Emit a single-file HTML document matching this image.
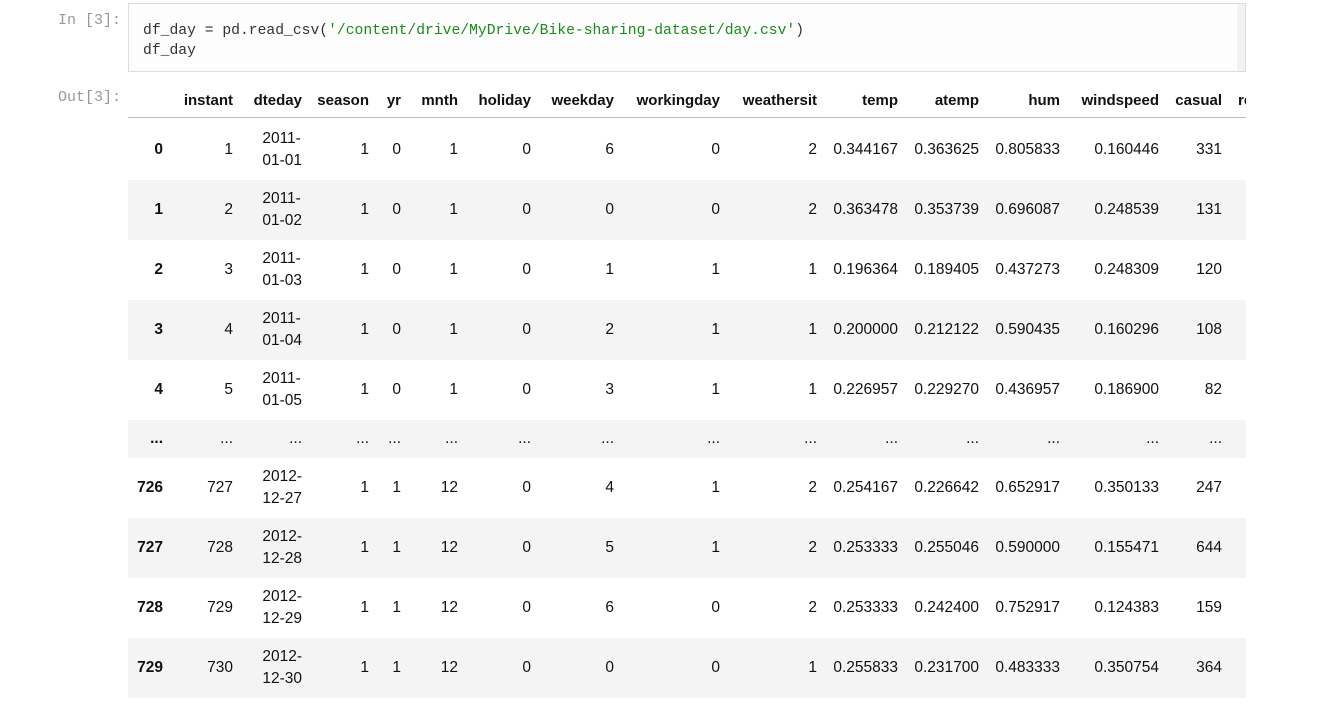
<!DOCTYPE html>
<html><head><meta charset="utf-8"><style>
body{margin:0;background:#fff;width:1330px;height:707px;overflow:hidden;position:relative;font-family:"Liberation Sans",sans-serif;}
.prompt{position:absolute;font-family:"Liberation Mono",monospace;font-size:15px;color:#999;}
.code{position:absolute;left:128px;top:3px;width:1116px;height:67px;border:1px solid #dcdcdc;background:#fdfdfd;}
.code .strip{position:absolute;right:0;top:0;width:8px;height:100%;background:#f2f2f2;}
.code pre{margin:0;position:absolute;left:14px;top:17px;font-family:"Liberation Mono",monospace;font-size:14.7px;line-height:20px;color:#333;}
.s{color:#1a8a1a;}
.wrap{position:absolute;left:128px;top:83px;width:1118px;height:620px;overflow:hidden;}
table{border-collapse:collapse;table-layout:fixed;width:1140px;font-size:15.5px;color:#111;}
td,th{padding:0;text-align:right;white-space:nowrap;}
th{height:34px;border-bottom:1px solid #bdbdbd;font-weight:bold;font-size:15px;}
td{height:60px;}
tr.f td{height:60px;padding-top:2px;}
tr.g td{background:#f4f4f4;}
tr.e td{height:38px;}
td.i{font-weight:bold;}
.d{display:inline-block;text-align:left;line-height:22px;}
</style></head><body>
<div class="prompt" style="left:58px;top:12px">In [3]:</div>
<div class="code"><div class="strip"></div><pre>df_day = pd.read_csv(<span class="s">'/content/drive/MyDrive/Bike-sharing-dataset/day.csv'</span>)
df_day</pre></div>
<div class="prompt" style="left:58px;top:89px">Out[3]:</div>
<div class="wrap"><table>
<colgroup><col style="width:35px"><col style="width:70px"><col style="width:69px"><col style="width:67px"><col style="width:32px"><col style="width:57px"><col style="width:73px"><col style="width:83px"><col style="width:106px"><col style="width:97px"><col style="width:81px"><col style="width:81px"><col style="width:81px"><col style="width:99px"><col style="width:63px"><col style="width:46px"></colgroup>
<tr><th></th><th>instant</th><th>dteday</th><th>season</th><th>yr</th><th>mnth</th><th>holiday</th><th>weekday</th><th>workingday</th><th>weathersit</th><th>temp</th><th>atemp</th><th>hum</th><th>windspeed</th><th>casual</th><th style="text-align:left;padding-left:16px">re</th></tr>
<tr class="f"><td class="i">0</td><td>1</td><td><span class="d">2011-<br>01-01</span></td><td>1</td><td>0</td><td>1</td><td>0</td><td>6</td><td>0</td><td>2</td><td>0.344167</td><td>0.363625</td><td>0.805833</td><td>0.160446</td><td>331</td><td></td></tr>
<tr class="g"><td class="i">1</td><td>2</td><td><span class="d">2011-<br>01-02</span></td><td>1</td><td>0</td><td>1</td><td>0</td><td>0</td><td>0</td><td>2</td><td>0.363478</td><td>0.353739</td><td>0.696087</td><td>0.248539</td><td>131</td><td></td></tr>
<tr><td class="i">2</td><td>3</td><td><span class="d">2011-<br>01-03</span></td><td>1</td><td>0</td><td>1</td><td>0</td><td>1</td><td>1</td><td>1</td><td>0.196364</td><td>0.189405</td><td>0.437273</td><td>0.248309</td><td>120</td><td></td></tr>
<tr class="g"><td class="i">3</td><td>4</td><td><span class="d">2011-<br>01-04</span></td><td>1</td><td>0</td><td>1</td><td>0</td><td>2</td><td>1</td><td>1</td><td>0.200000</td><td>0.212122</td><td>0.590435</td><td>0.160296</td><td>108</td><td></td></tr>
<tr><td class="i">4</td><td>5</td><td><span class="d">2011-<br>01-05</span></td><td>1</td><td>0</td><td>1</td><td>0</td><td>3</td><td>1</td><td>1</td><td>0.226957</td><td>0.229270</td><td>0.436957</td><td>0.186900</td><td>82</td><td></td></tr>
<tr class="g e"><td class="i">...</td><td>...</td><td>...</td><td>...</td><td>...</td><td>...</td><td>...</td><td>...</td><td>...</td><td>...</td><td>...</td><td>...</td><td>...</td><td>...</td><td>...</td><td></td></tr>
<tr><td class="i">726</td><td>727</td><td><span class="d">2012-<br>12-27</span></td><td>1</td><td>1</td><td>12</td><td>0</td><td>4</td><td>1</td><td>2</td><td>0.254167</td><td>0.226642</td><td>0.652917</td><td>0.350133</td><td>247</td><td></td></tr>
<tr class="g"><td class="i">727</td><td>728</td><td><span class="d">2012-<br>12-28</span></td><td>1</td><td>1</td><td>12</td><td>0</td><td>5</td><td>1</td><td>2</td><td>0.253333</td><td>0.255046</td><td>0.590000</td><td>0.155471</td><td>644</td><td></td></tr>
<tr><td class="i">728</td><td>729</td><td><span class="d">2012-<br>12-29</span></td><td>1</td><td>1</td><td>12</td><td>0</td><td>6</td><td>0</td><td>2</td><td>0.253333</td><td>0.242400</td><td>0.752917</td><td>0.124383</td><td>159</td><td></td></tr>
<tr class="g"><td class="i">729</td><td>730</td><td><span class="d">2012-<br>12-30</span></td><td>1</td><td>1</td><td>12</td><td>0</td><td>0</td><td>0</td><td>1</td><td>0.255833</td><td>0.231700</td><td>0.483333</td><td>0.350754</td><td>364</td><td></td></tr>
</table></div>
</body></html>
